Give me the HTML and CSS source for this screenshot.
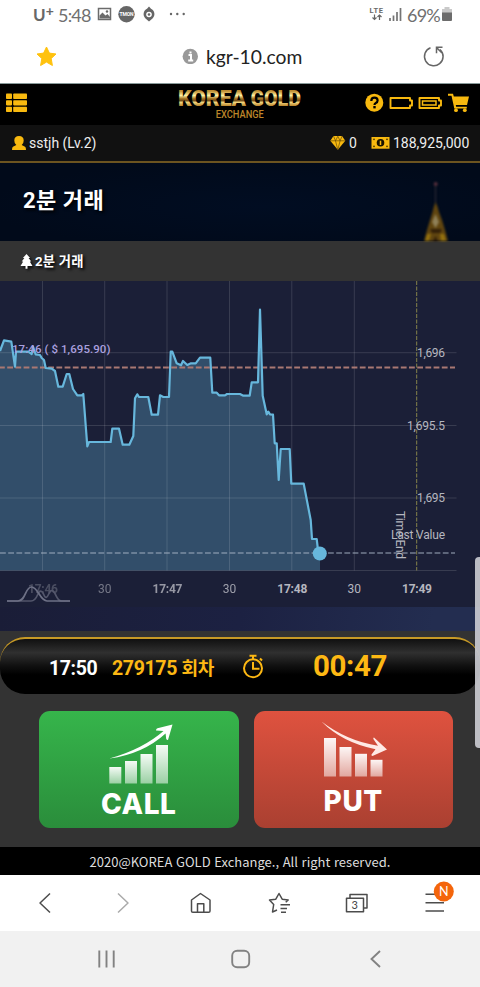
FILE: index.html
```html
<!DOCTYPE html>
<html lang="ko">
<head>
<meta charset="utf-8">
<meta name="viewport" content="width=device-width, initial-scale=1">
<title>KOREA GOLD Exchange</title>
<link rel="stylesheet" href="styles.css">
</head>
<body>
<div class="phone">
  <div class="status">
    <span class="carrier">U<sup>+</sup></span>
    <span class="clock">5:48</span>
    <svg class="status-icons" viewBox="96 0 94 30" width="94" height="30">
      <path d="M98.500 8.500h12v11h-12z" fill="none" stroke="#6b6b6b" stroke-width="1.500"/>
      <path d="M99.500 18.500v-3l3-3 3 3 2-1.500 2.500 3v1.500z" fill="#6b6b6b"/><circle cx="107" cy="11.500" r="1.200" fill="#6b6b6b"/>
      <circle cx="126.500" cy="14.200" r="8.200" fill="#666"/>
      <text x="119.500" y="16.300" textLength="14" class="badge-word">TMON</text>
      <path d="M149 6.500l2 2.200a6 6 0 0 1 1.500 9.800L149 21.500l-3.500-3a6 6 0 0 1 1.500-9.800z" fill="#666"/>
      <circle cx="149" cy="14.500" r="2.800" fill="#fff"/><circle cx="149" cy="14.500" r="1.300" fill="#666"/>
      <g fill="#666"><circle cx="171" cy="14" r="1.200"/><circle cx="177.300" cy="14" r="1.200"/><circle cx="183.700" cy="14" r="1.200"/></g>
    </svg>
    <svg class="signal" viewBox="368 0 36 30" width="36" height="30">
      <text x="369.500" y="13" textLength="13.500" class="lte">LTE</text>
      <path d="M374.500 14.500v5m-2-2 2 2 2-2M379.500 20v-5m-2 2 2-2 2 2" fill="none" stroke="#666" stroke-width="1.200"/>
      <path d="M390 18v3M393.500 15.500V21M397 12v9M400.500 8v13" stroke="#747474" stroke-width="1.700"/>
    </svg>
    <span class="percent">69%</span>
    <svg viewBox="440 0 14 30" width="14" height="30"><path d="M444.500 7h5v2h2.500v5h-10V9h2.500z" fill="#c9c9c9"/><path d="M442 12.500h10V20q0 1-1 1h-8q-1 0-1-1z" fill="#6c6c6c"/></svg>
  </div>

  <div class="address">
    <svg class="fav" viewBox="36 45 22 22" width="22" height="22"><path d="M46.500 47l2.900 6.100 6.600.9-4.800 4.500 1.200 7-5.900-3.400-5.900 3.400 1.200-7-4.800-4.500 6.600-.9z" fill="#ffc20e" stroke="#ffc20e" stroke-linejoin="round"/></svg>
    <svg class="info" viewBox="182 47 16 16" width="16" height="16"><circle cx="190.300" cy="55.500" r="7.700" fill="#999"/><path d="M188.500 54h2.500v5.500m-2.800 0h5M189.500 51.500h2" fill="none" stroke="#fff" stroke-width="2"/></svg>
    <span class="url">kgr-10.com</span>
    <svg class="reload" viewBox="422 44 24 24" width="24" height="24"><path d="M430.500 47.700A9.300 9.300 0 1 0 440 49.500" fill="none" stroke="#666" stroke-width="1.500"/><path d="M442.500 47.300h-6v6M437 48l5 5" fill="none" stroke="#666" stroke-width="1.500"/></svg>
  </div>

  <header class="header">
    <svg class="menu" viewBox="6 93 22 20" width="22" height="20" fill="#f8b90f"><rect x="6" y="93.500" width="6" height="5.500" rx=".8"/><rect x="13.200" y="93.500" width="13.800" height="5.500" rx=".8"/><rect x="6" y="100.200" width="6" height="5.200" rx=".8"/><rect x="13.200" y="100.200" width="13.800" height="5.200" rx=".8"/><rect x="6" y="106.700" width="6" height="5.300" rx=".8"/><rect x="13.200" y="106.700" width="13.800" height="5.300" rx=".8"/></svg>
    <svg class="logo" viewBox="174 84 132 41" width="132" height="41">
      <defs><linearGradient id="gold" x1="0" y1="0" x2="0" y2="1"><stop offset=".22" stop-color="#bd8c32"/><stop offset=".4" stop-color="#fff1a0"/><stop offset=".53" stop-color="#a06e20"/><stop offset=".6" stop-color="#77501a"/><stop offset=".68" stop-color="#eed27b"/><stop offset=".82" stop-color="#b98229"/></linearGradient></defs>
      <text x="178" y="105.500" textLength="68" lengthAdjust="spacingAndGlyphs" class="logo-main">KOREA</text>
      <text x="250.500" y="105.500" textLength="50.500" lengthAdjust="spacingAndGlyphs" class="logo-main">GOLD</text>
      <text x="215.800" y="118" textLength="48" lengthAdjust="spacingAndGlyphs" class="logo-sub">EXCHANGE</text>
    </svg>
    <svg class="tools" viewBox="364 92 106 22" width="106" height="22">
      <circle cx="374.300" cy="102.700" r="9" fill="#f8b90f"/>
      <path d="M371.300 101q0-3.300 3.200-3.300 3.100 0 3.100 2.700 0 1.700-1.800 2.500-1.300.6-1.300 2" fill="none" stroke="#000" stroke-width="2.200"/><rect x="373.300" y="106" width="2.400" height="2.400"/>
      <g fill="none" stroke="#f8b90f" stroke-width="1.900" stroke-linejoin="round"><path d="M390.500 98h19.500v2.500h2v5h-2v2.500h-19.500zM419.500 98H439v2.500h2v5h-2v2.500h-19.500z"/></g><path d="M422.500 101h13.500v4h-13.500z" fill="none" stroke="#f8b90f" stroke-width="1.500"/>
      <path d="M448 93.800h5l.8 2.700H469l-2 8.500h-11.200l.3 1.700h10.700v1.800h-12.500l-2.800-12.700H448z" fill="#f8b90f"/><circle cx="456" cy="110.200" r="1.900" fill="#f8b90f"/><circle cx="464.800" cy="110.200" r="1.900" fill="#f8b90f"/>
    </svg>
  </header>

  <div class="account">
    <svg viewBox="11 134 16 16" width="16" height="16"><path d="M19 135q4.700 0 4.700 4.500 0 3-2 4.600l3.300 1.600q1 .5 1 3.300H12q0-2.800 1-3.300l3.300-1.600q-2-1.600-2-4.600 0-4.500 4.700-4.500z" fill="#f8b90f"/></svg>
    <span class="user">sstjh (Lv.2)</span>
    <svg viewBox="330 134 16 16" width="16" height="16"><path d="M333.500 135h8.500l3.300 4.800-7.500 9-7.500-9z" fill="#f8b90f"/><path d="M330.500 139.800h14.500M333.500 135l2 4.800 2.300 9 2.300-9 2-4.800M335.500 139.800l2.300-4.500 2.300 4.500" fill="none" stroke="#654a06" stroke-width=".7"/></svg>
    <span class="gems">0</span>
    <svg viewBox="371 135 19 14" width="19" height="14"><rect x="371.500" y="136" width="18" height="11.700" fill="#f8b90f"/><circle cx="380.500" cy="141.800" r="3.800" fill="#191300"/><path d="M380.500 139.700v4.300" stroke="#f8b90f" stroke-width="1.500"/><g fill="#4c3906"><circle cx="374" cy="138.300" r=".9"/><circle cx="387" cy="138.300" r=".9"/><circle cx="374" cy="145.300" r=".9"/><circle cx="387" cy="145.300" r=".9"/></g></svg>
    <span class="balance">188,925,000</span>
  </div>

  <section class="banner">
    <h1>2분 거래</h1>
    <svg class="tower" viewBox="420 176 32 65" width="32" height="65"><path d="M435.500 186v22" stroke="#2e2935" stroke-width="1.200"/><circle cx="435.700" cy="184" r="2" fill="#572f3c"/><path d="M435.500 202q2 4 3.500 10l3 8 3 10 3 11h-24l3-11 3-10 2.500-8q1-5 3-10z" fill="#604510"/><path d="M435.500 214l3.500 8-3.500 6-3.500-6z" fill="#8f8058"/><path d="M430 229h12l-2 4h-8zM433 241l2.500-5 2.500 5z" fill="#332008"/><path d="M425 241l2-7h4l-2 7zM441 241l-1-7h4l2 7z" fill="#94710f"/></svg>
  </section>

  <div class="crumb">
    <svg viewBox="20 253 13 15" width="13" height="15"><path d="M26.500 253l3.600 4h-1.500l2.700 3.500h-1.500l2.700 4.500h-5v2.700h-2V265h-5l2.700-4.500h-1.500l2.700-3.500h-1.500z" fill="#fff"/></svg>
    <span>2분 거래</span>
  </div>

  <svg class="chart" viewBox="0 281 480 326" width="480" height="326">
    <path d="M0 351L4 340.300 11.300 341.700 15 366.700 16 351.700H28.300L31.700 354 33 346.700 35.700 354.300 40 355 41.700 358 44 360 45.700 368 51.700 368.700 55 371 58.300 386.700H62.700L66.700 374H69.300L73 389 77.300 395.300H82L83.300 394 87.300 446.300 89 442H110.700L112.300 428.700H119L122.700 444.700H129.300L133.300 436 135 398.300 137.300 394.300 139 397H148.300L151.700 414.700H158L160 395.300 163.300 397H169L170.700 351.700H172.300L176.700 363.300 181 365.300 183 361 187.300 365 191 363.300H195.700L200 357.700H210.300L212.300 392.700H216.700L219 395.300H225L227 394H240L243.300 395.700H249.700L251.700 382.300H258L260 309.500 262.700 395.700 266.700 414.300 268.300 411.700 270 414.300 273 414.700 274.700 443.300H276.700L278.700 480 280.700 449H289.700L291.300 483.700H303.700L310.700 520 312 539H316.700L318 550 320 553.500V570.500H0z" fill="#67b7dc" fill-opacity=".31"/>
    <path class="grid" d="M42.500 281V570.500M104.700 281V570.500M167 281V570.500M229.500 281V570.500M291.800 281V570.500M354.300 281V570.500M0 352.700H456.500M0 425.500H456.500M0 498H456.500M0 570.500H456.500"/>
    <path d="M0 367.500H455" stroke="#a97873" stroke-width="1.900" stroke-dasharray="5.800 2.400" stroke-dashoffset="1"/>
    <path d="M0 553H455" stroke="#a9b6c8" stroke-opacity=".62" stroke-width="1.500" stroke-dasharray="5.800 2.400"/>
    <path d="M416.700 281V570.500" stroke="#85834a" stroke-width="1" stroke-dasharray="4 1.500"/>
    <path class="price" d="M0 351L4 340.300 11.300 341.700 15 366.700 16 351.700H28.300L31.700 354 33 346.700 35.700 354.300 40 355 41.700 358 44 360 45.700 368 51.700 368.700 55 371 58.300 386.700H62.700L66.700 374H69.300L73 389 77.300 395.300H82L83.300 394 87.300 446.300 89 442H110.700L112.300 428.700H119L122.700 444.700H129.300L133.300 436 135 398.300 137.300 394.300 139 397H148.300L151.700 414.700H158L160 395.300 163.300 397H169L170.700 351.700H172.300L176.700 363.300 181 365.300 183 361 187.300 365 191 363.300H195.700L200 357.700H210.300L212.300 392.700H216.700L219 395.300H225L227 394H240L243.300 395.700H249.700L251.700 382.300H258L260 309.500 262.700 395.700 266.700 414.300 268.300 411.700 270 414.300 273 414.700 274.700 443.300H276.700L278.700 480 280.700 449H289.700L291.300 483.700H303.700L310.700 520 312 539H316.700L318 550 320 553.500"/>
    <circle cx="319.800" cy="553.500" r="7" fill="#67b7dc"/>
    <text x="12" y="352.700" textLength="98.500" class="entry">17:46 ( $ 1,695.90)</text>
    <g class="axis">
      <text x="445" y="357" text-anchor="end" textLength="28">1,696</text>
      <text x="445" y="429.500" text-anchor="end" textLength="38">1,695.5</text>
      <text x="445" y="502" text-anchor="end" textLength="28">1,695</text>
      <text x="445" y="538.800" text-anchor="end" textLength="54">Last Value</text>
      <text transform="translate(396 511) rotate(90)" textLength="48">Time End</text>
      <text x="28" y="593" textLength="30" class="major ghost">17:46</text>
      <text x="98" y="593" textLength="13.500" opacity=".58">30</text>
      <text x="152.500" y="593" textLength="30" class="major" opacity=".8">17:47</text>
      <text x="222.700" y="593" textLength="13.500" opacity=".85">30</text>
      <text x="277.300" y="593" textLength="30" class="major">17:48</text>
      <text x="347.500" y="593" textLength="13.500">30</text>
      <text x="402" y="593" textLength="30" class="major">17:49</text>
    </g>
    <g fill="none" stroke-width="1.700"><path d="M7 601H31q4 0 6.500-6c2-5 4-5 6-1 2 5 3.500 4 5.500-.5 2-4 4-4 6 0 2 4 3 7.500 6.500 7.500H70" stroke="#53566b"/><path d="M7 601h11c8 0 7-14 13.500-14S40 601 47 601h23" stroke="#6e7186"/></g>
  </svg>
  <div class="chart-foot"></div>

  <main class="trade">
    <div class="round">
      <span class="round-time">17:50</span>
      <span class="round-no">279175 <span class="round-unit">회차</span></span>
      <svg viewBox="242 652 24 26" width="24" height="26" fill="none" stroke="#fdb813"><circle cx="253" cy="667.300" r="9" stroke-width="2"/><path d="M249.500 654.700h7M253 655v3M260 657.500l2 2M253 661v6.700h6.500" stroke-width="2"/></svg>
      <span class="countdown">00:47</span>
    </div>
    <div class="actions">
      <button class="call">
        <svg viewBox="105 722 68 64" width="68" height="64"><defs><linearGradient id="up" x1="0" y1="0" x2="0" y2="1"><stop stop-color="#fff" stop-opacity=".95"/><stop offset="1" stop-color="#fff" stop-opacity=".52"/></linearGradient></defs><g fill="url(#up)"><rect x="109.300" y="767" width="12" height="16.500"/><rect x="125" y="761" width="12" height="22.500"/><rect x="140.500" y="754" width="12" height="29.500"/><rect x="156" y="745" width="12" height="38.500"/></g><path d="M109.500 758.500Q143 749 163.500 731l-7.500-.5q0-1.800 1.500-2.300L172.500 724.500 168 740q-1.500 0-1.800-1.300l-.6-5.200Q143 754 109.500 758.500z" fill="#fff"/></svg>
        <span>CALL</span>
      </button>
      <button class="put">
        <svg viewBox="319 719 68 64" width="68" height="64"><g fill="url(#up)"><rect x="324" y="738" width="12" height="38.500"/><rect x="339.500" y="747" width="12" height="29.500"/><rect x="355" y="753.800" width="12" height="22.700"/><rect x="370.500" y="759.800" width="12" height="16.700"/></g><path d="M321.500 721.500Q347 741 378 745.800l-4.500-6.500q-.7-1.500.5-1.800l13 12-14.500 6.500q-1.500-.2-1-1.500l4-5.300Q342 742.500 321.500 721.500z" fill="#ffeae5"/></svg>
        <span>PUT</span>
      </button>
    </div>
  </main>

  <footer class="copyright"><span>2020@KOREA GOLD Exchange., All right reserved.</span></footer>

  <nav class="browser-nav">
    <svg viewBox="0 875 480 56" width="480" height="56" fill="none" stroke="#4c4c4c" stroke-width="1.500" stroke-linejoin="round">
      <path d="M50 893.500L40 903l10 9.500"/><path d="M118 893.500L128 903l-10 9.500" stroke="#aaa"/>
      <path d="M191.500 900l9-6.500 9.500 6.500v11q0 1.300-1.300 1.300h-15.900q-1.300 0-1.300-1.300zM197.500 912v-8.300h6.300v8.300"/>
      <path d="M277 910l-4.500 2 1.200-7.500-4.200-4.500 6.300-.8 3.200-5.700 3.200 5.700 6 .8-2.500 2.300M280.500 904.800h9.500M280.500 908.500h6.500M281 912.300h5"/>
      <path d="M350 898v-3.500h17v13.500h-3M346.500 898.300h17v13.500h-17z"/>
      <path d="M425.500 894.300H444M425.500 902.700H444M425.500 911H444"/>
      <circle cx="443.800" cy="891.500" r="10" fill="#f4650b" stroke="none"/>
      <text x="354.800" y="908.800" text-anchor="middle" class="tab-count">3</text><text x="443.800" y="896" text-anchor="middle" class="new-mark">N</text>
    </svg>
  </nav>
  <nav class="system-nav">
    <svg viewBox="0 931 480 56" width="480" height="56" fill="none" stroke="#828282" stroke-width="1.900"><path d="M99.300 950.500v17M106.500 950.500v17M113.700 950.500v17M380 951l-8.500 8 8.500 8"/><rect x="232.200" y="950.800" width="17" height="16.500" rx="5"/></svg>
  </nav>
  <div class="edge-handle"></div>
</div>
</body>
</html>
```
FILE: styles.css
```css
* { box-sizing: border-box; }
body { margin: 0; background: #fff; font-family: Roboto, "Noto Sans CJK KR", sans-serif; }
svg { display: block; }
span { white-space: nowrap; }
.phone { position: relative; width: 480px; height: 987px; overflow: hidden; display: flex; flex-direction: column; }

.status { height: 30px; padding-left: 33px; display: grid; grid-template-columns: 25px 38px 272px 39px 33px 14px; color: #707070; }
.carrier { font: 700 17px/30px Lato, sans-serif; color: #686868; }
.carrier sup { font-size: 14px; line-height: 0; vertical-align: 5px; }
.clock, .percent { font: 400 18px/30px Lato, sans-serif; letter-spacing: -0.800px; }
.badge-word { font: 700 5px Roboto, sans-serif; fill: #fff; }
.lte { font: 700 7.500px Roboto, sans-serif; fill: #6a6a6a; }

.address { height: 54px; padding-left: 36px; display: grid; grid-template-columns: 146px 24px 216px 24px; align-items: center; border-bottom: 1px solid #899; }
.fav { margin-top: -1px; }
.info { margin-top: -2px; }
.reload { margin-top: -2px; }
.url { font: 400 19.300px/24px Lato, sans-serif; color: #222; }

.header { height: 41px; padding: 0 10px 0 6px; background: #000; display: flex; align-items: center; justify-content: space-between; }
.header .menu, .header .tools { margin-top: -3px; }
.header .logo { margin-left: 88px; }
.logo-main { font: 900 22px Roboto, sans-serif; fill: url(#gold); }
.logo-sub { font: 500 10.500px Roboto, sans-serif; fill: #bd862a; }

.account { height: 38px; padding-left: 11px; display: grid; grid-template-columns: 18px 301px 19px 22px 22px auto; align-items: center; background: #111; border-bottom: 2px solid #6c5420; color: #eee; font-size: 14px; }
.account svg { margin-top: -1px; }

.banner { height: 78px; padding: 0 28px 0 23px; display: flex; justify-content: space-between; align-items: flex-end; background: radial-gradient(ellipse at 55% 55%, #010d22, #010a1a 75%); }
.banner h1 { margin: 0 0 3px; align-self: center; font-size: 22px; line-height: 28px; font-weight: 700; letter-spacing: 0.500px; color: #fff; text-shadow: 2px 2px 3px #000; }
.tower { filter: blur(0.8px); }

.crumb { height: 40px; padding-left: 20px; background: #333; display: flex; gap: 2px; align-items: center; color: #fff; font-size: 13.300px; font-weight: 700; }
.crumb span { margin-top: -2px; letter-spacing: 0.200px; text-shadow: 2px 2px 3px #000; }
.crumb svg { filter: drop-shadow(2px 2px 1px #111); }

.chart { background: #1b1f37; font-family: Roboto, sans-serif; fill: none; }
.grid { stroke: #fff; stroke-opacity: 0.130; stroke-width: 1; }
.price { stroke: #67b7dc; stroke-width: 2.200; stroke-linejoin: round; }
.entry { font-size: 11.500px; font-weight: 500; fill: #aaa0df; }
.axis { font-size: 12px; fill: #b5b6bf; }
.major { font-weight: 700; }
.ghost { opacity: 0.300; }
.chart-foot { height: 24px; background: linear-gradient(100deg, #1a1d37, #1c2142 50%, #232d50 90%); }

.trade { height: 216px; padding-top: 6px; background: #333; }
.round { height: 57px; padding: 0 0 2px 49px; display: grid; grid-template-columns: 63px 130px 71px auto; align-items: center; border-top: 2px solid #c79a26; border-radius: 25px; background: linear-gradient(#101010 0%, #303030 25%, #111 48%, #000 65%); font-weight: 700; }
.round-time { margin-top: 6px; font-size: 19.500px; font-weight: 700; letter-spacing: -0.400px; color: #fff; }
.round-no { margin-top: 3px; font-size: 19.500px; font-weight: 700; letter-spacing: -0.350px; color: #fdb813; }
.round-unit { font-size: 18px; }
.countdown { font-size: 29.500px; letter-spacing: -0.400px; color: #fdb813; }
.actions { padding: 17px 0 0 39px; display: flex; gap: 15px; }
.actions button { width: 199.500px; height: 117px; border: 0; border-radius: 11px; padding: 11px 0 0; display: flex; flex-direction: column; align-items: center; color: #fff; font: 800 28px/36px Inter, sans-serif; }
.actions span { letter-spacing: 0.600px; }
.call { background: linear-gradient(#36b54b, #2a8d3b); }
.put { background: linear-gradient(#df523f, #aa4031); }
.actions .put { padding-top: 8px; }

.copyright { height: 28px; background: #000; color: #ddd; font: 400 13px/29px "Noto Sans CJK KR", sans-serif; text-align: center; }
.browser-nav { height: 56px; background: #fff; }
.browser-nav text { stroke: none; font-family: Lato, sans-serif; }
.tab-count { font-size: 11px; fill: #444; }
.new-mark { font-size: 12.500px; fill: #fff; }
.system-nav { height: 56px; background: #f1f1f1; }
.edge-handle { position: absolute; left: 475px; top: 557px; width: 8px; height: 191px; border-radius: 5px; background: rgba(205,205,212,0.900); }
```
